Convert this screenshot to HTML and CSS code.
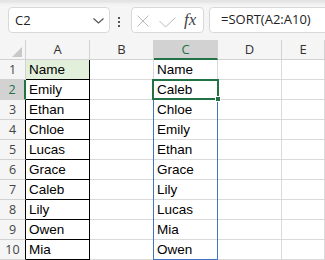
FILE: index.html
```
<!DOCTYPE html>
<html>
<head>
<title>Sheet</title>
<link rel="stylesheet" href="styles.css">
<script>

var colA = ["Name", "Emily", "Ethan", "Chloe", "Lucas", "Grace", "Caleb", "Lily", "Owen", "Mia"];
var colC = ["Name", "Caleb", "Chloe", "Emily", "Ethan", "Grace", "Lily", "Lucas", "Mia", "Owen"];
var letters = ["A", "B", "C", "D", "E"];

function buildSheet() {
	var html = '<div class="cell corner"><span class="tri"></span></div>';
	for (i = 0;i < letters.length;i ++) {
		html += '<div class="cell colhead' + (letters[i] == "C" ? ' selhead' : '') + '">' + letters[i] + '</div>';
	}

	for (i = 0;i < colA.length;i ++) {
		var rowcls = "rowhead";
		if (i == 1)
			rowcls += " selrow";
		else if (i > 1)
			rowcls += " boxed";

		html += '<div class="cell ' + rowcls + '">' + (i + 1) + '</div>';
		html += '<div class="cell data boxa' + (i == 0 ? ' titlefill' : '') + '">' + colA[i] + '</div>';
		html += '<div class="cell data"></div>';
		html += '<div class="cell data">' + colC[i] + '</div>';
		html += '<div class="cell data"></div>';
		html += '<div class="cell data"></div>';
	}

	html += '<div class="spill"></div>';
	html += '<div class="selection"><span class="handle"></span></div>';

	document.getElementById("sheet").innerHTML = html;
}

document
.addEventListener("DOMContentLoaded",
    function () {
		buildSheet();
    });

</script>
</head>
<body>

<div class="toolbar">
	<div class="namebox">
		<span class="ref">C2</span>
		<svg class="chev" width="11" height="6" viewBox="0 0 11 6"><path d="M0.5 0.5 L5.5 5 L10.5 0.5" fill="none" stroke="#555" stroke-width="1.2"/></svg>
	</div>
	<div class="grip"><i></i><i></i><i></i></div>
	<div class="fxbox">
		<svg class="cancel" width="12" height="12" viewBox="0 0 12 12"><path d="M0.5 0.5 L11.5 11.5 M11.5 0.5 L0.5 11.5" stroke="#b9b9b9" stroke-width="1"/></svg>
		<svg class="enter" width="17" height="11" viewBox="0 0 17 11"><path d="M0.5 4 L6.5 10 L16.5 0.5" fill="none" stroke="#b9b9b9" stroke-width="1"/></svg>
		<span class="fx">fx</span>
	</div>
	<div class="formula">=SORT(A2:A10)</div>
</div>

<div class="sheet" id="sheet">
</div>

</body>
</html>
```

FILE: styles.css
```
body {
  margin: 0;
  width: 325px;
  height: 260px;
  overflow: hidden;
  background-color: white;
  font-family: "Liberation Sans", Arial, sans-serif;
}

.toolbar {
  height: 40px;
  box-sizing: border-box;
  display: flex;
  align-items: flex-start;
  padding: 7px 0 0 8px;
  background: linear-gradient(#e4e4e4 0, #e4e4e4 2px, #eeeeee 3px, #f5f5f5 6px);
  font-family: "Open Sans", "Noto Sans", sans-serif;
  font-size: 13px;
  color: #222;
}

.namebox {
  width: 102px;
  height: 26px;
  box-sizing: border-box;
  border: 1px solid #d9d9d9;
  border-radius: 4px;
  background-color: white;
  display: flex;
  align-items: center;
  padding: 0 5px 0 6px;
}

.ref {
  flex: 1;
  line-height: 24px;
}

.chev {
  margin-top: 1px;
}

.grip {
  margin-left: 8px;
  margin-top: 10px;
  width: 2px;
  display: flex;
  flex-direction: column;
  gap: 2px;
}

.grip i {
  display: block;
  width: 2px;
  height: 2px;
  background-color: #555;
}

.fxbox {
  margin-left: 11px;
  width: 73px;
  height: 26px;
  box-sizing: border-box;
  border: 1px solid #d9d9d9;
  border-radius: 4px;
  background-color: white;
  display: flex;
  align-items: center;
  padding-left: 5px;
}

.cancel {
  margin-top: 1px;
}

.enter {
  margin-left: 10px;
  margin-top: 4px;
}

.fx {
  margin-left: 8px;
  font-family: "Liberation Serif", "DejaVu Serif", serif;
  font-style: italic;
  font-size: 17px;
  color: #444;
  line-height: 20px;
}

.formula {
  flex: 1;
  margin-left: 5px;
  margin-right: -10px;
  height: 26px;
  box-sizing: border-box;
  border: 1px solid #d9d9d9;
  border-radius: 4px;
  background-color: white;
  padding-left: 11px;
  line-height: 23px;
}

.sheet {
  position: relative;
  display: grid;
  grid-template-columns: 26px 64px 64px 64px 64px 1fr;
  grid-auto-rows: 20px;
}

.cell {
  box-sizing: border-box;
  border-right: 1px solid #dadada;
  border-bottom: 1px solid #dadada;
}

.corner {
  position: relative;
  background-color: #f5f5f5;
  border-color: #d2d2d2;
}

.tri {
  position: absolute;
  right: 3px;
  bottom: 2px;
  width: 0;
  height: 0;
  border-left: 10px solid transparent;
  border-bottom: 10px solid #c8c8c8;
}

.colhead, .rowhead {
  background-color: #f5f5f5;
  border-color: #d2d2d2;
  font-family: "Open Sans", "Noto Sans", sans-serif;
  font-size: 13px;
  color: #333;
  text-align: center;
  line-height: 19px;
}

.rowhead {
  color: #444;
  font-size: 12.5px;
}

.selhead {
  background-color: #d2d2d2;
  color: #217346;
  border-bottom: 2px solid #217346;
}

.selrow {
  background-color: #d2d2d2;
  color: #217346;
  border-right: 2px solid #217346;
}

.boxed {
  border-right-color: #000;
}

.data {
  font-size: 13.5px;
  color: #000;
  padding: 1px 0 0 3px;
  line-height: 18px;
  white-space: nowrap;
}

.boxa {
  border-right-color: #000;
  border-bottom-color: #000;
}

.titlefill {
  background-color: #e2efda;
}

.spill {
  position: absolute;
  left: 153px;
  top: 39px;
  width: 65px;
  height: 181px;
  box-sizing: border-box;
  border: 1px solid #4472c4;
}

.selection {
  position: absolute;
  left: 152px;
  top: 39px;
  width: 67px;
  height: 21px;
  box-sizing: border-box;
  border: 2px solid #217346;
}

.handle {
  position: absolute;
  right: -4px;
  bottom: -4px;
  width: 4px;
  height: 4px;
  background-color: #217346;
  border: 1px solid white;
}
```
